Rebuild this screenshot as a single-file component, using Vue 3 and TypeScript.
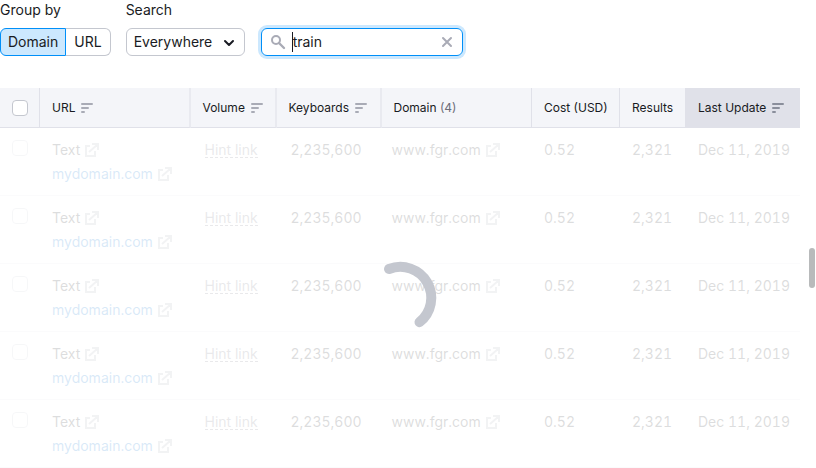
<script setup lang="ts">
import { ref } from 'vue'

interface Column {
  key: string
  label: string
  sortable?: boolean
  active?: boolean
  count?: number
}

const columns: Column[] = [
  { key: 'url', label: 'URL', sortable: true },
  { key: 'volume', label: 'Volume', sortable: true },
  { key: 'keyboards', label: 'Keyboards', sortable: true },
  { key: 'domain', label: 'Domain', count: 4 },
  { key: 'cost', label: 'Cost (USD)' },
  { key: 'results', label: 'Results' },
  { key: 'updated', label: 'Last Update', sortable: true, active: true },
]

const rows = Array.from({ length: 5 }, (_, i) => ({
  id: i,
  title: 'Text',
  link: 'mydomain.com',
  volume: 'Hint link',
  keyboards: '2,235,600',
  domain: 'www.fgr.com',
  cost: '0.52',
  results: '2,321',
  updated: 'Dec 11, 2019',
}))

const externalIcon = 'M5 3H1v10h9V8M4 9l8-7M7 1h6v6'

const group = ref('Domain')
const scope = ref('Everywhere')
const query = ref('train')
</script>

<template>
  <main class="page">
    <form class="filters" @submit.prevent>
      <div class="field">
        <span id="group-label" class="label">Group by</span>
        <div class="pills" role="group" aria-labelledby="group-label">
          <button
            v-for="name in ['Domain', 'URL']"
            :key="name"
            type="button"
            class="pill"
            :class="{ selected: group === name }"
            :aria-pressed="group === name"
            @click="group = name"
          >{{ name }}</button>
        </div>
      </div>
      <div class="field">
        <label class="label" for="scope">Search</label>
        <div class="search-row">
          <div class="select">
            <select id="scope" v-model="scope">
              <option>Everywhere</option>
            </select>
            <svg class="chevron" width="12" height="12" viewBox="0 0 12 12" aria-hidden="true">
              <path d="M2 4l4 4 4-4" fill="none" stroke="#191b23" stroke-width="2" stroke-linecap="round" stroke-linejoin="round" />
            </svg>
          </div>
          <div class="search">
            <svg width="16" height="16" viewBox="0 0 16 16" aria-hidden="true">
              <circle cx="6" cy="6" r="4" fill="none" stroke="#a9abb6" stroke-width="2" />
              <path d="M9 9l5 5" stroke="#a9abb6" stroke-width="2.4" stroke-linecap="round" />
            </svg>
            <span class="caret"></span>
            <input v-model="query" type="text" aria-label="Search text" />
            <button type="button" class="clear" aria-label="Clear" @click="query = ''">
              <svg width="12" height="12" viewBox="0 0 12 12" aria-hidden="true">
                <path d="M2 2l8 8M10 2l-8 8" stroke="#a9abb6" stroke-width="2" stroke-linecap="round" />
              </svg>
            </button>
          </div>
        </div>
      </div>
    </form>

    <section class="data" aria-busy="true">
      <table>
        <colgroup>
          <col class="w-check" />
          <col v-for="c in columns" :key="c.key" :class="'w-' + c.key" />
        </colgroup>
        <thead>
          <tr>
            <th class="check"><input type="checkbox" aria-label="Select all" /></th>
            <th v-for="c in columns" :key="c.key" :class="{ active: c.active, sortable: c.sortable }">
              <span class="head">
                <span>{{ c.label }} <span v-if="c.count" class="count">({{ c.count }})</span></span>
                <svg v-if="c.sortable" class="sort" width="12" height="10" viewBox="0 0 12 10" aria-hidden="true">
                  <path d="M1 1h10M1 5h6M1 9h2" fill="none" stroke="currentColor" stroke-width="2" stroke-linecap="round" />
                </svg>
              </span>
            </th>
          </tr>
        </thead>
        <tbody>
          <tr v-for="r in rows" :key="r.id">
            <td class="check"><input type="checkbox" :aria-label="'Select row ' + (r.id + 1)" /></td>
            <td>
              <div class="line">
                {{ r.title }}
                <svg class="ext" width="14" height="14" viewBox="0 0 14 14" aria-hidden="true"><path :d="externalIcon" /></svg>
              </div>
              <div class="line">
                <a href="#">{{ r.link }}</a>
                <svg class="ext" width="14" height="14" viewBox="0 0 14 14" aria-hidden="true"><path :d="externalIcon" /></svg>
              </div>
            </td>
            <td class="number"><a href="#" class="hint">{{ r.volume }}</a></td>
            <td class="number">{{ r.keyboards }}</td>
            <td class="site">
              <div class="line">
                {{ r.domain }}
                <svg class="ext" width="14" height="14" viewBox="0 0 14 14" aria-hidden="true"><path :d="externalIcon" /></svg>
              </div>
            </td>
            <td>{{ r.cost }}</td>
            <td>{{ r.results }}</td>
            <td>{{ r.updated }}</td>
          </tr>
        </tbody>
      </table>
      <div class="overlay" role="status" aria-label="Loading">
        <svg width="80" height="80" viewBox="0 0 80 80" aria-hidden="true">
          <path d="M29 11A31 31 0 0 1 59.500 64.200" fill="none" stroke="#c4c7cf" stroke-width="10" stroke-linecap="round" />
        </svg>
      </div>
      <div class="thumb"></div>
    </section>
  </main>
</template>

<style>
body {
  background: #fff;
}
</style>

<style scoped>
.page {
  font-family: Inter, "Liberation Sans", sans-serif;
  font-size: 14px;
  line-height: 20px;
  color: #191b23;
}
input,
select,
button {
  font: inherit;
  color: inherit;
  margin: 0;
}
.filters {
  display: flex;
  gap: 15px;
}
.field {
  display: flex;
  flex-direction: column;
  gap: 8px;
}
.label {
  align-self: flex-start;
}
.pills,
.search-row {
  display: flex;
}
.search-row {
  gap: 16px;
}
.pill {
  height: 28px;
  padding: 0 7px;
  border: 1px solid #c4c7cf;
  background: #fff;
}
.pill:first-child {
  border-radius: 6px 0 0 6px;
}
.pill:last-child {
  padding: 0 8px;
  border-left: 0;
  border-radius: 0 6px 6px 0;
}
.pill.selected {
  border: 1px solid #008ff8;
  background: #cce8fe;
}
.select {
  position: relative;
}
.select select {
  appearance: none;
  width: 119px;
  height: 28px;
  padding: 0 28px 0 7px;
  border: 1px solid #c4c7cf;
  border-radius: 6px;
  background: #fff;
}
.chevron {
  position: absolute;
  right: 10px;
  top: 9px;
  pointer-events: none;
}
.search {
  display: flex;
  align-items: center;
  box-sizing: border-box;
  width: 202px;
  height: 28px;
  padding: 0 8px;
  border: 1px solid #008ff8;
  border-radius: 6px;
  box-shadow: 0 0 0 3px #cce8fe;
}
.search input {
  flex: 1;
  min-width: 0;
  padding: 0;
  border: 0;
  outline: 0;
  background: none;
}
.caret {
  width: 1px;
  height: 20px;
  margin-left: 6px;
  background: #191b23;
}
.clear {
  display: flex;
  padding: 1px;
  border: 0;
  background: none;
}
.data {
  position: relative;
  margin-top: 32px;
  padding-right: 16px;
}
table {
  width: 100%;
  table-layout: fixed;
  border-collapse: separate;
  border-spacing: 0;
}
.w-check {
  width: 40px;
}
.w-volume {
  width: 86px;
}
.w-keyboards {
  width: 105px;
}
.w-cost {
  width: 88px;
}
.w-results {
  width: 66px;
}
.w-updated {
  width: 114px;
}
th,
td {
  box-sizing: border-box;
  text-align: left;
  white-space: nowrap;
}
th {
  height: 40px;
  padding: 0 0 0 12px;
  border-right: 1px solid #e0e1e9;
  border-bottom: 1px solid #e0e1e9;
  background: #f4f5f9;
  font-size: 12px;
  font-weight: 400;
}
th.sortable {
  border-right: 2px solid #e9eaf0;
}
th:last-child {
  border-right: 0;
}
th.active {
  background: #e0e1e9;
}
.head {
  display: flex;
  align-items: center;
  gap: 6px;
}
.count {
  color: #6c6e79;
}
.sort {
  color: #a9abb6;
}
.active .sort {
  color: #8a8e9b;
}
td {
  height: 68px;
  padding: 10px 0 9px 12px;
  border-bottom: 1px solid #e0e1e9;
  vertical-align: top;
  line-height: 24px;
  font-variant-numeric: tabular-nums;
}
td.number {
  padding-left: 14px;
}
td.site {
  padding-left: 10px;
}
.line {
  display: flex;
  align-items: center;
  gap: 5px;
}
.line a {
  color: #006dca;
  text-decoration: none;
}
.ext path {
  fill: none;
  stroke: #a9abb6;
  stroke-width: 2;
}
.hint {
  display: inline-block;
  line-height: 14px;
  color: #6c6e79;
  text-decoration: none;
  border-bottom: 1px dashed #6c6e79;
}
.check input {
  display: block;
  appearance: none;
  box-sizing: border-box;
  width: 16px;
  height: 16px;
  border: 1px solid #c4c7cf;
  border-radius: 4px;
  background: #fff;
}
td.check {
  padding-top: 12px;
}
.overlay {
  position: absolute;
  inset: 40px 16px 0 0;
  display: flex;
  align-items: center;
  justify-content: center;
  background: rgba(255, 255, 255, 0.85);
}
.thumb {
  position: absolute;
  top: 160px;
  right: 1px;
  width: 6px;
  height: 40px;
  border-radius: 3px;
  background: #b8babb;
}
</style>
